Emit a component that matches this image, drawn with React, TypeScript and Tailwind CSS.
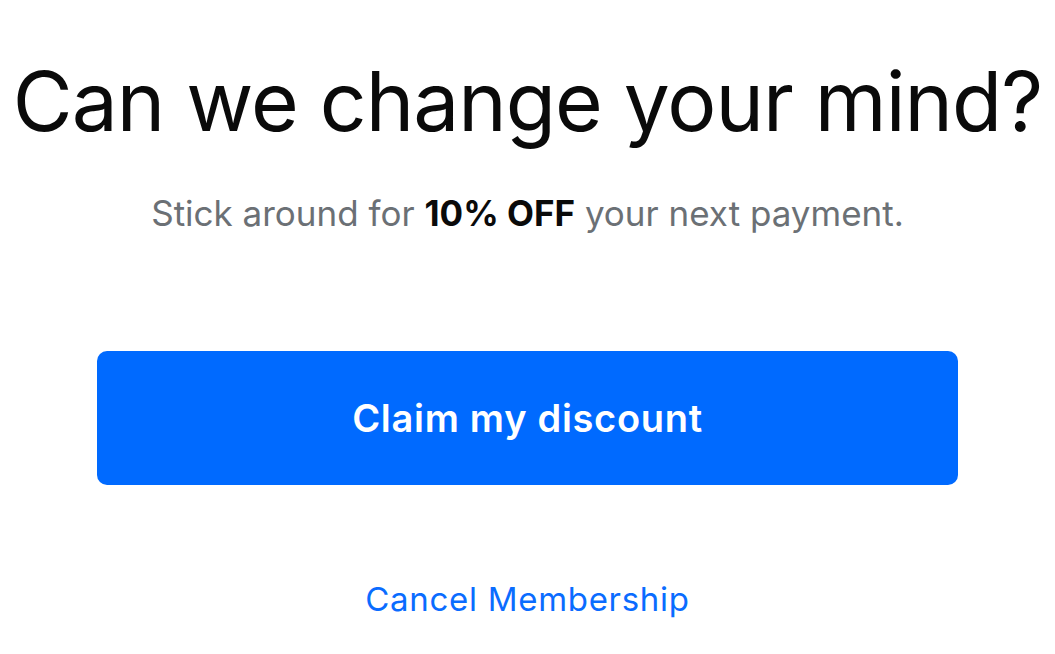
import React from "react";

export default function App() {
  return (
    <div className="w-[1055px] h-[654px] bg-white flex flex-col items-center font-['Inter',sans-serif] overflow-hidden">
      <h1 className="mt-[61px] text-[82px] leading-[1] text-[#0a0a0a] font-normal tracking-[-1px] whitespace-nowrap">
        Can we change your mind?
      </h1>
      <p className="mt-[53px] text-[35px] leading-[1] text-[#6b7075] whitespace-nowrap">
        Stick around for <span className="font-bold text-[#0a0a0a]">10% OFF</span> your next payment.
      </p>
      <button className="mt-[120px] w-[861px] h-[134px] rounded-[10px] bg-[#006aff] text-white text-[38px] font-semibold tracking-[0.7px] flex items-center justify-center">
        Claim my discount
      </button>
      <a className="mt-[98px] text-[33px] leading-[1] text-[#0a6cff] tracking-[0.7px] whitespace-nowrap">Cancel Membership</a>
    </div>
  );
}
